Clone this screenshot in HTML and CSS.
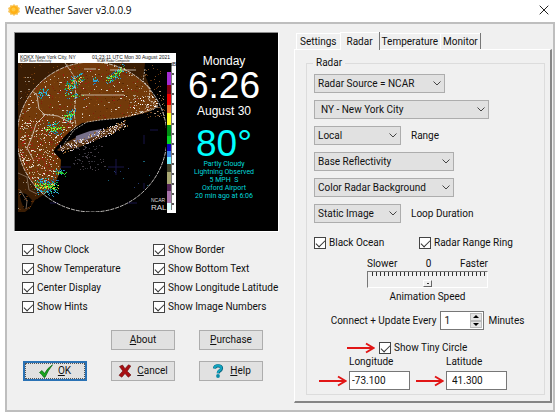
FILE: index.html
```html
<!DOCTYPE html>
<html lang="en">
<head>
<meta charset="utf-8">
<title>Weather Saver v3.0.0.9</title>
<link rel="stylesheet" href="styles.css">
</head>
<body>
<header class="titlebar">
  <svg class="sun" viewBox="0 0 12 12" aria-hidden="true"><path d="M6 0l1.5 1.6L9.6 1l.5 2.1 1.9.9L11.200 6l.8 2-1.900.9-.5 2.100-2.100-.6L6 12l-1.500-1.600L2.400 11l-.5-2.100L0 8l.8-2L0 4l1.900-.9L2.400 1l2.100.6z" fill="#f8c45a"/><circle cx="6" cy="6" r="4" fill="#ffb116"/><circle cx="5.500" cy="5.500" r="2" fill="#ffc840"/></svg>
  <h1>Weather Saver v3.0.0.9</h1>
  <button class="close" aria-label="Close"><svg viewBox="0 0 10 10"><path d="M.7.7l8.600 8.600M9.300.7L.7 9.300" stroke="#222" fill="none"/></svg></button>
</header>
<main class="dialog">
  <section class="left">
    <div class="preview">
      <svg class="radar" viewBox="0 0 158 160" role="img" aria-label="Radar">
        <defs>
          <clipPath id="land"><path d="M0 10H127L126 20 131 32 135 42 140 50 139 54 130 59 110 64 82 67 64 70 52 78 46 84 35 98 43 107 42 119 36 132 27 141 17 147 12 155 7 159H0Z"/></clipPath>
          <clipPath id="map"><rect y="10" width="148" height="149"/></clipPath>
          <clipPath id="disc"><circle cx="74" cy="84" r="75"/></clipPath>
        </defs>
        <rect width="158" height="160" fill="#fff"/>
        <rect y="10" width="149" height="150"/>
        <g clip-path="url(#map)">
          <g clip-path="url(#land)">
            <rect y="10" width="148" height="150" fill="#3a1d04"/>
            <circle cx="74" cy="84" r="75" fill="#733a0a"/>
            <path d="M1 139l7 2 6 6-1 6-7 3-3-8z" fill="#000"/>
          </g>
          <path d="M39 97l10-8 12-6 17-3 18-7 12-4-4 6-12 6-16 7-17 7-18 3z" fill="#5a3517"/>
          <path d="M58 83l14-5 12-2-3 6-16 6-8 2z" fill="#777089"/>
          <g id="speckle"></g>
          <g fill="none" stroke="#181448"><path d="M98 106v16M90 114h16M126 82v9M126 130v6M43 114h10M32 150h8M110 150h9M132 77h8"/></g>
          <g fill="none" stroke="#ddd4c8" stroke-width=".8">
            <path d="M47 10l9 13 2 20-2 17 2 13-6 6" stroke-dasharray="4 1"/>
            <path d="M14 38l5 4 2 14 6 6-9 9-4 13-5 11 7 13"/>
            <path d="M66 16h12M92 17h26M63 42h43M24 61l16 2 15 8"/>
            <path d="M127 16l-2 12 7 7-1 12 9 7-17 6-20 5-21 2-13 2-13 8-10 14" stroke-dasharray="2 1"/>
            <path d="M0 120l9 4 2 13 8 4M2 137l7 11-1 8" stroke="#917b68"/>
            <circle cx="74" cy="84" r="75" stroke="#ece9e5" stroke-dasharray="4 1"/>
          </g>
          <path d="M11 112l6-7 8 1 3 6-5 4" fill="none" stroke="#a82318" stroke-width=".8" stroke-dasharray="2 1"/>
        </g>
        <g>
          <rect x="149" y="10" width="4" height="10"/><rect x="149" y="19" width="4" height="13" fill="#a52bd5"/>
          <rect x="149" y="32" width="4" height="9" fill="#850012"/><rect x="149" y="41" width="4" height="11" fill="#ef0000"/>
          <rect x="149" y="52" width="4" height="8" fill="#f1752c"/><rect x="149" y="60" width="4" height="12" fill="#ffff20"/>
          <rect x="149" y="72" width="4" height="11" fill="#008d12"/><rect x="149" y="83" width="4" height="8" fill="#05d323"/>
          <rect x="149" y="91" width="4" height="7" fill="#0902bb"/><rect x="149" y="98" width="4" height="6" fill="#3a7ee5"/>
          <rect x="149" y="104" width="4" height="7" fill="#72efff"/><rect x="149" y="111" width="4" height="8" fill="#45462c"/>
          <rect x="149" y="119" width="4" height="12" fill="#aaa872"/><rect x="149" y="131" width="4" height="7" fill="#542457"/>
          <rect x="149" y="138" width="4" height="12" fill="#a873aa"/><rect x="149" y="150" width="4" height="7" fill="#d9ffff"/>
          <path d="M153.500 10v147" stroke="#222" stroke-width=".6"/>
          <path d="M155 20v134" stroke="#222" stroke-width="1.500" stroke-dasharray="2 8"/>
        </g>
        <g class="map-text">
          <text x="2" y="5.500">KOKX New York City, NY</text><text x="74" y="5.500">01:23:11 UTC Mon 30 August 2021</text>
          <text class="tiny" x="2" y="9.200">NCEP Base Reflectivity</text><text class="tiny" x="79" y="9.200">NCAR Radar Composite</text>
          <text class="white" x="133" y="149">NCAR</text><text class="white big" x="133" y="157">RAL</text>
          <text x="152" y="13">dB</text>
        </g>
      </svg>
      <div class="readout">
        <div class="day">Monday</div>
        <div class="clock">6:26</div>
        <div class="day">August 30</div>
        <div class="temp">80°</div>
        <div class="conditions">Partly Cloudy<br>Lightning Observed<br>5 MPH&nbsp; S<br>Oxford Airport<br>20 min ago at 6:06</div>
      </div>
    </div>
    <div class="checks">
      <label><input type="checkbox" checked>Show Clock</label><label><input type="checkbox" checked>Show Border</label>
      <label><input type="checkbox" checked>Show Temperature</label><label><input type="checkbox" checked>Show Bottom Text</label>
      <label><input type="checkbox" checked>Center Display</label><label><input type="checkbox" checked>Show Longitude Latitude</label>
      <label><input type="checkbox" checked>Show Hints</label><label><input type="checkbox" checked>Show Image Numbers</label>
    </div>
    <div class="buttons">
      <button class="btn about"><span><u>A</u>bout</span></button>
      <button class="btn"><span><u>P</u>urchase</span></button>
      <button class="btn ok"><svg viewBox="0 0 14 14"><path d="M.5 8.500L3 6.500 5.500 9.500Q8.500 4 13.500.8 9 6.500 6 13.300H4.800Q3 10.300.5 8.500z" fill="#17a51d" stroke="#06600d" stroke-width=".7"/></svg><span><u>O</u>K</span></button>
      <button class="btn"><svg viewBox="0 0 14 14"><path d="M1.500 2.500L4.500 1 7 4.700 10.500.8 12.800 2 9.200 7.200 13 11 10.300 13.200 7 9.500 3.800 13.200 1 11.300 4.800 7z" fill="#a80f13" stroke="#650609" stroke-width=".6"/></svg><span><u>C</u>ancel</span></button>
      <button class="btn"><svg viewBox="0 0 14 14"><path d="M3.500 4.500Q3.800 1.800 7 1.800 10.800 1.800 10.500 4.500 10.300 6 8.500 7 7.300 7.700 7.200 9.300" fill="none" stroke="#06627d" stroke-width="3.200"/><path d="M3.500 4.300Q3.800 1.600 7 1.600 10.500 1.800 10.300 4.300 10 5.800 8.200 6.800 7 7.500 6.900 9" fill="none" stroke="#12a5c0" stroke-width="2"/><circle cx="7" cy="12" r="1.900" fill="#078ba8"/></svg><span><u>H</u>elp</span></button>
    </div>
  </section>
  <section class="right">
    <div class="tabs" role="tablist">
      <button role="tab">Settings</button><button role="tab" class="active" aria-selected="true">Radar</button><button role="tab">Temperature</button><button role="tab">Monitor</button>
    </div>
    <div class="panel" role="tabpanel">
      <fieldset>
        <legend>Radar</legend>
        <div class="selects">
          <div class="row"><span class="combo w-source"><select aria-label="Radar source"><option>Radar Source = NCAR</option></select><svg viewBox="0 0 8 5"><path d="M.5.5L4 4 7.500.5"/></svg></span></div>
          <div class="row"><span class="combo w-city"><select class="indent" aria-label="Radar site"><option>NY - New York City</option></select><svg viewBox="0 0 8 5"><path d="M.5.5L4 4 7.500.5"/></svg></span></div>
          <div class="row"><span class="combo w-small"><select id="range"><option>Local</option></select><svg viewBox="0 0 8 5"><path d="M.5.5L4 4 7.500.5"/></svg></span><label for="range">Range</label></div>
          <div class="row"><span class="combo w-mid"><select aria-label="Product"><option>Base Reflectivity</option></select><svg viewBox="0 0 8 5"><path d="M.5.5L4 4 7.500.5"/></svg></span></div>
          <div class="row"><span class="combo w-mid"><select aria-label="Background"><option>Color Radar Background</option></select><svg viewBox="0 0 8 5"><path d="M.5.5L4 4 7.500.5"/></svg></span></div>
          <div class="row"><span class="combo w-small"><select id="loop"><option>Static Image</option></select><svg viewBox="0 0 8 5"><path d="M.5.5L4 4 7.500.5"/></svg></span><label for="loop">Loop Duration</label></div>
        </div>
        <div class="pair"><label><input type="checkbox" checked>Black Ocean</label><label><input type="checkbox" checked>Radar Range Ring</label></div>
        <div class="speed">
          <div class="scale"><span>Slower</span><span>0</span><span>Faster</span></div>
          <div class="slider"><input id="speed" type="range" min="-15" max="15" value="0"></div>
          <label for="speed">Animation Speed</label>
        </div>
        <div class="update">
          <label for="minutes">Connect + Update Every</label>
          <span class="spin"><input id="minutes" type="text" value="1"><span class="steps"><button aria-label="Increase"><svg viewBox="0 0 6 3"><path d="M0 3L3 0 6 3z"/></svg></button><button aria-label="Decrease"><svg viewBox="0 0 6 3"><path d="M0 0L3 3 6 0z"/></svg></button></span></span>
          <span>Minutes</span>
        </div>
        <div class="circle">
          <svg class="arrow" viewBox="0 0 28 12"><path d="M0 6H26M19 1.500L26.500 6 19 10.500"/></svg>
          <label><input type="checkbox" checked>Show Tiny Circle</label>
        </div>
        <div class="coords">
          <div class="coord"><label for="lon">Longitude</label><svg class="arrow" viewBox="0 0 28 12"><path d="M0 6H26M19 1.500L26.500 6 19 10.500"/></svg><input id="lon" type="text" value="-73.100"></div>
          <div class="coord"><label for="lat">Latitude</label><svg class="arrow" viewBox="0 0 28 12"><path d="M0 6H26M19 1.500L26.500 6 19 10.500"/></svg><input id="lat" class="indent" type="text" value="41.300"></div>
        </div>
      </fieldset>
    </div>
  </section>
</main>
<script src="radar.js"></script>
</body>
</html>
```
FILE: styles.css
```css
* { box-sizing: border-box; }
body {
  margin: 0;
  min-height: 100vh;
  display: flex;
  flex-direction: column;
  background: #fff;
  color: #111;
  font: 10px/14px Roboto, "Liberation Sans", sans-serif;
}
button, input, select { font: inherit; color: inherit; margin: 0; }
svg { display: block; }
.titlebar { display: flex; align-items: center; height: 22px; padding: 0 7px 2px 8px; }
.titlebar h1 { flex: 1; margin: 0 0 0 5px; font: 10px/16px "Open Sans", "Noto Sans", sans-serif; color: #000; }
.sun { width: 12px; height: 12px; }
.close { border: 0; padding: 0; background: none; }
.close svg { width: 10px; height: 10px; }

.dialog {
  flex: 1;
  display: flex;
  gap: 16px;
  margin: 0 1px 1px 5px;
  padding: 8px 1px 7px 7px;
  border: 2px solid #bebebe;
  background: #f0f0f0;
}
.left { flex: 264 1 0; min-width: 0; }
.right { flex: 258 1 0; display: flex; flex-direction: column; }

.preview {
  display: flex;
  height: 199px;
  padding: 20px 0 0 3px;
  background: #000;
  border: solid #8c8c8c;
  border-width: 1px 0 0 1px;
  box-shadow: 1px 1px #fff;
}
.radar { flex: none; width: 158px; height: 160px; }
.readout { flex: 1; padding: 1px 6px 0 0; text-align: center; color: #fff; font-family: "Liberation Sans", sans-serif; }
.day { font-size: 12px; line-height: 14px; }
.clock, .temp { font-size: 37px; line-height: 36px; }
.temp { padding-top: 10px; color: #0ff; line-height: 32px; }
.conditions { color: #00d8dc; font: 7px/8px Roboto, "Liberation Sans", sans-serif; white-space: nowrap; }
.map-text { font: 5px "Liberation Sans", sans-serif; fill: #111; }
.tiny { font-size: 3px; }
.white { fill: #ddd; }
.big { font-size: 8px; }

label { display: inline-flex; align-items: center; white-space: nowrap; }
input[type="checkbox"] {
  appearance: none;
  display: grid;
  place-items: center;
  flex: none;
  width: 12px;
  height: 12px;
  margin-right: 3px;
  border: 1px solid #444;
  background: #fff;
}
input[type="checkbox"]:checked::before {
  content: "";
  width: 8px;
  height: 4px;
  margin-bottom: 2px;
  border: solid #333;
  border-width: 0 0 1px 1px;
  transform: rotate(-45deg);
}
.checks { display: grid; grid-template-columns: 131px 1fr; row-gap: 5px; margin: 12px 0 0 8px; }
.buttons { display: grid; grid-template-columns: repeat(3, 64px); gap: 11px 24px; margin: 16px 0 0 9px; }
.btn {
  display: flex;
  align-items: center;
  justify-content: center;
  gap: 5px;
  height: 20px;
  padding: 0;
  border: 1px solid #adadad;
  background: #e1e1e1;
}
.btn svg { width: 14px; height: 14px; }
.btn.about { grid-column: 2; }
.btn.ok { border: 2px solid #2a72b5; outline: 1px dotted #555; outline-offset: -3px; }

.tabs { display: flex; align-items: flex-end; padding-left: 2px; height: 17px; }
.tabs button {
  height: 16px;
  padding: 0 2px;
  border: solid #fff;
  border-width: 1px 0 0 1px;
  background: #f0f0f0;
  box-shadow: 1px 0 #777;
}
.tabs button:first-child { padding: 0 3px; box-shadow: none; }
.tabs .active { position: relative; height: 18px; margin-bottom: -1px; padding: 0 6px; }
.panel {
  flex: 1;
  display: flex;
  padding: 6px 5px 6px 11px;
  border: 1px solid #fff;
  border-right: 2px solid #858585;
  border-bottom: 2px solid #858585;
}
fieldset { flex: 1; min-width: 0; margin: 0; padding: 4px 7px 0; border: 1px solid #dcdcdc; }
legend { padding: 0 3px; margin-left: -1px; }
.selects { display: grid; row-gap: 7px; }
.row { display: flex; align-items: center; gap: 10px; }
.combo { display: grid; align-items: center; height: 19px; }
.combo > * { grid-area: 1 / 1; }
.combo select {
  appearance: none;
  width: 100%;
  height: 19px;
  padding: 0 16px 0 3px;
  border: 1px solid #adadad;
  border-radius: 0;
  background: #e1e1e1;
}
.combo select.indent { padding-left: 6px; }
.combo svg { justify-self: end; width: 8px; height: 5px; margin-right: 4px; pointer-events: none; fill: none; stroke: #444; }
.w-source { width: 131px; }
.w-city { width: 175px; }
.w-small { width: 87px; }
.w-mid { width: 140px; }
.pair { display: grid; grid-template-columns: 105px 1fr; margin-top: 13px; }
.speed { display: flex; flex-direction: column; align-items: center; margin-top: 7px; padding-left: 4px; }
.scale { display: flex; justify-content: space-between; width: 121px; }
.slider {
  width: 121px;
  height: 17px;
  margin-bottom: 2px;
  border: 1px solid;
  border-color: #777 #fff #fff #777;
  background: repeating-linear-gradient(90deg, #333 0 1px, transparent 1px 4px) 4px 0 / 114px 4px no-repeat;
}
.slider input { display: block; appearance: none; width: 100%; height: 15px; padding-top: 8px; background: none; }
.slider input::-webkit-slider-thumb {
  appearance: none;
  width: 9px;
  height: 7px;
  border: 1px solid;
  border-color: #fff #666 #666 #fff;
  background: radial-gradient(#333 0 1px, #f0f0f0 1px);
}
.update { display: flex; align-items: center; justify-content: center; gap: 4px; margin-top: 7px; padding-left: 4px; }
.spin { display: flex; width: 44px; height: 19px; padding: 1px; border: 1px solid #777; background: #fff; }
.spin input { flex: 1; min-width: 0; padding: 0 2px; border: 0; background: none; }
.steps { display: grid; width: 12px; }
.steps button { display: grid; place-items: center; padding: 0; border: 1px solid #bbb; background: #e4e4e4; }
.steps svg { width: 6px; height: 3px; }
.circle { display: flex; align-items: center; gap: 4px; margin: 11px 0 0 33px; }
.arrow { width: 28px; height: 12px; fill: none; stroke: #e11616; stroke-width: 2; }
.coords { display: flex; gap: 6px; margin-left: 5px; }
.coord { display: grid; grid-template-columns: 28px 61px; column-gap: 2px; row-gap: 2px; align-items: center; }
.coord label { grid-column: 2; }
.coord input { width: 61px; height: 19px; padding: 0 2px; border: 1px solid #777; background: #fff; }
.coord input.indent { padding-left: 5px; }
```
FILE: radar.js
```js
// Scatters terrain and precipitation pixels over the radar base map.
const layer = document.getElementById("speckle");
const NS = "http://www.w3.org/2000/svg";
let seed = 90217;
const rnd = () => (seed = (seed * 48271) % 2147483647) / 2147483647;

function group(clip) {
  const g = document.createElementNS(NS, "g");
  if (clip) g.setAttribute("clip-path", `url(#${clip})`);
  layer.append(g);
  return g;
}
function dot(parent, x, y, fill, w = 1) {
  const r = document.createElementNS(NS, "rect");
  r.setAttribute("x", Math.round(x));
  r.setAttribute("y", Math.round(y));
  r.setAttribute("width", w);
  r.setAttribute("height", 1);
  r.setAttribute("fill", fill);
  parent.append(r);
}
function scatter(parent, n, box, colors) {
  for (let i = 0; i < n; i++) {
    dot(parent, box[0] + rnd() * box[2], box[1] + rnd() * box[3], colors[Math.floor(rnd() * colors.length)], rnd() > 0.8 ? 2 : 1);
  }
}
// Band of pixels from (x1,y1) to (x2,y2), hotter colours in its core.
function echo(n, x1, y1, x2, y2, spread, hot) {
  for (let i = 0; i < n; i++) {
    const t = rnd();
    const d = (rnd() + rnd() - 1) * spread;
    const near = Math.abs(d) < spread / 4;
    const set = near ? hot : ["#1769ad", "#278fcb", "#13a646", "#39cbd1"];
    dot(echoes, x1 + (x2 - x1) * t + (rnd() - 0.5) * spread, y1 + (y2 - y1) * t + d, set[Math.floor(rnd() * set.length)]);
  }
}
const land = group("land");
scatter(land, 700, [0, 10, 148, 149], ["#5a2b06", "#83460f", "#63300a"]);
scatter(land, 60, [0, 20, 40, 139], ["#9b8a76"]);
const inner = document.createElementNS(NS, "g");
inner.setAttribute("clip-path", "url(#disc)");
land.append(inner);
scatter(inner, 420, [0, 12, 142, 140], ["#9e1a10", "#851c0c"]);
scatter(inner, 420, [0, 12, 142, 140], ["#ded3c3", "#b8a48b"]);
scatter(inner, 380, [2, 66, 52, 64], ["#f0e6d8", "#c9b49c", "#a71c12"]);
scatter(inner, 70, [112, 42, 28, 20], ["#fff", "#ad9b88"]);
const sea = group();
scatter(sea, 70, [55, 92, 32, 25], ["#34333b", "#484048"]);
scatter(sea, 60, [126, 38, 20, 26], ["#b69a7d", "#7a4a20"]);
scatter(sea, 24, [127, 11, 16, 25], ["#7a4a20", "#5a2b06"]);
for (let i = 0; i < 260; i++) {
  const t = rnd();
  dot(sea, 42 + t * 67, 97 - t * 27 + (rnd() - 0.5) * 9, ["#e8e0df", "#a195b5", "#8c602f", "#c6b29b"][Math.floor(rnd() * 4)]);
}
scatter(sea, 12, [88, 105, 44, 30], ["#176276", "#253a70"]);
const echoes = group();
const green = ["#22cf3b", "#4be235", "#bfde2e"];
echo(130, 48, 35, 63, 23, 7, ["#22cf3b", "#f2c52c", "#e8812b"]);
echo(110, 90, 27, 105, 15, 6, green);
echo(45, 21, 42, 28, 37, 5, ["#2c9fd0"]);
echo(80, 48, 64, 55, 59, 6, green);
echo(90, 30, 75, 43, 75, 7, green);
echo(30, 48, 42, 65, 43, 4, green);
echo(20, 74, 28, 80, 27, 4, ["#2c9fd0"]);
echo(45, 38, 119, 48, 120, 4, green);
echo(260, 19, 132, 37, 134, 10, ["#22cf3b", "#4be235", "#f3db37", "#f2a73a"]);
```
